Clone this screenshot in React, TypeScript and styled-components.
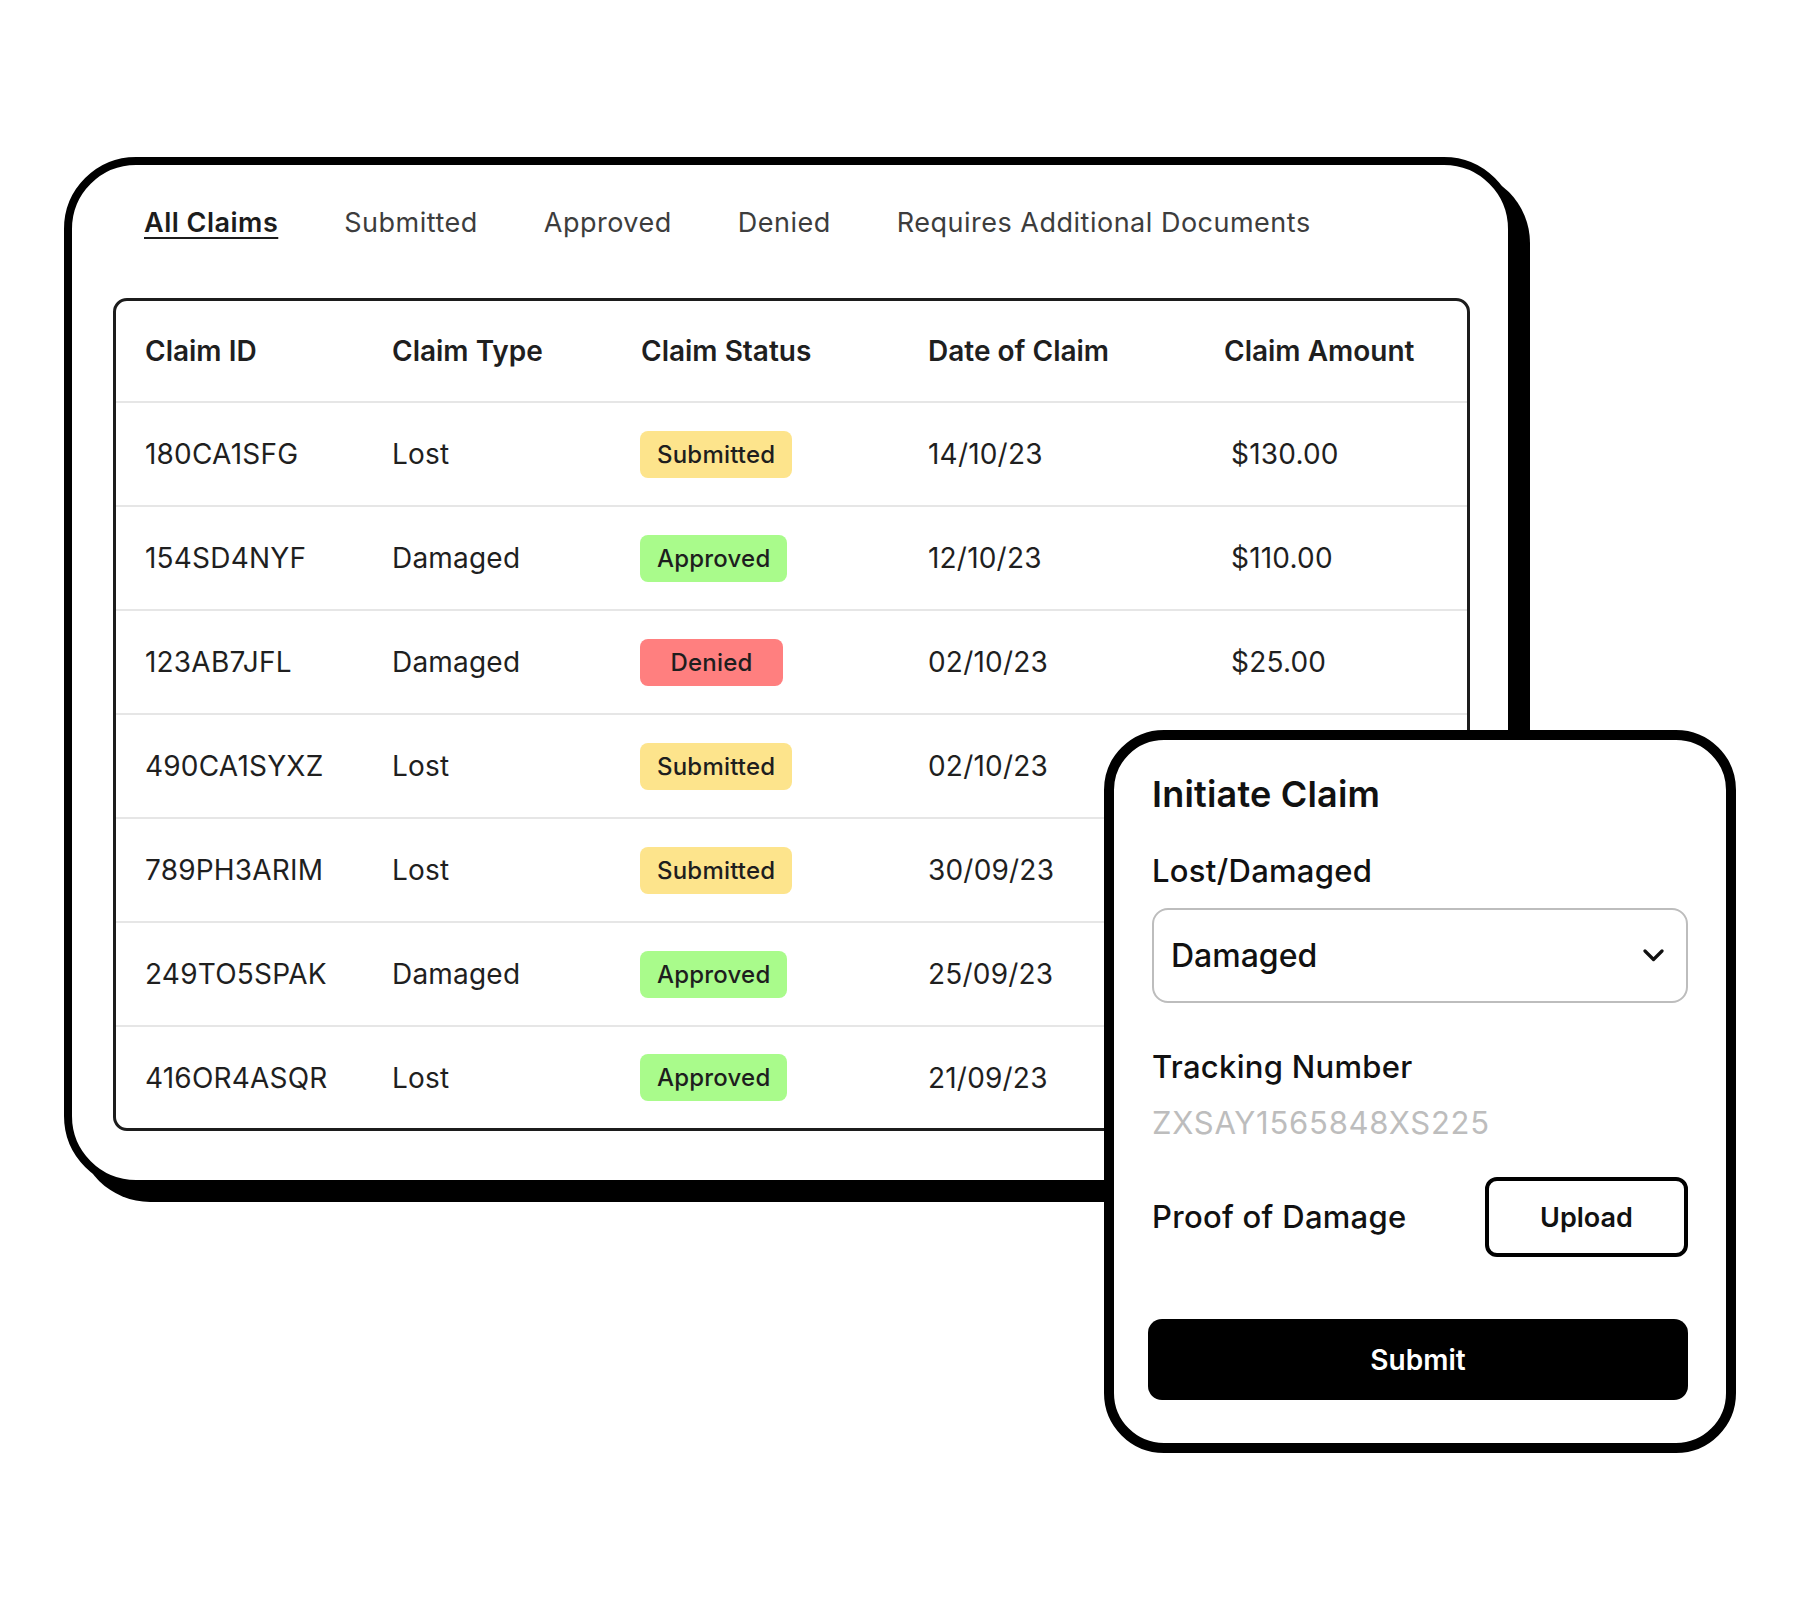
import React from "react";
import styled, { createGlobalStyle } from "styled-components";

const GlobalStyle = createGlobalStyle`
  html, body {
    margin: 0;
    padding: 0;
    background: #ffffff;
  }
  body {
    font-family: Inter, "Noto Sans", "Liberation Sans", sans-serif;
    color: #1a1a1a;
  }
  * {
    box-sizing: border-box;
  }
`;

const Stage = styled.div`
  position: relative;
  width: 1800px;
  height: 1600px;
  padding: 157px 0 0 64px;
`;

const ClaimsCard = styled.section`
  width: 1452px;
  background: #fff;
  border: 8px solid #000;
  border-radius: 72px;
  box-shadow: 14px 14px 0 #000;
  padding: 42px 38px 49px 41px;
`;

const Tabs = styled.nav`
  display: flex;
  gap: 66px;
  padding-left: 31px;
  margin-bottom: 60px;
`;

const Tab = styled.span<{ active?: boolean }>`
  font-size: 27px;
  line-height: 31px;
  letter-spacing: 0.5px;
  font-weight: ${(p) => (p.active ? 600 : 400)};
  color: ${(p) => (p.active ? "#1c1c1c" : "#3d3d3d")};
  text-decoration: ${(p) => (p.active ? "underline" : "none")};
  text-decoration-thickness: 2px;
  text-underline-offset: 5px;
`;

const Table = styled.div`
  border: 3px solid #1c1c1c;
  border-radius: 14px;
  overflow: hidden;
`;

const Row = styled.div<{ header?: boolean }>`
  display: grid;
  grid-template-columns: 247px 249px 287px 296px 1fr;
  align-items: center;
  height: ${(p) => (p.header ? "102px" : "104px")};
  padding-left: 29px;
  border-bottom: 2px solid #e6e6e6;

  &:last-child {
    border-bottom: none;
    height: 101px;
  }
`;

const HeadCell = styled.div`
  font-size: 28px;
  font-weight: 600;
  color: #1f1f1f;
`;

const Cell = styled.div<{ shift?: number }>`
  font-size: 28px;
  letter-spacing: 0.2px;
  font-weight: 400;
  color: #1f1f1f;
  padding-left: ${(p) => p.shift ?? 0}px;
`;

const BADGE_COLORS: Record<string, string> = {
  Submitted: "#fde48c",
  Approved: "#a9fb8b",
  Denied: "#ff7f7f",
};

const Badge = styled.span<{ status: string }>`
  display: inline-flex;
  align-items: center;
  justify-content: center;
  min-width: 143px;
  height: 47px;
  padding: 0 17px;
  margin-left: -1px;
  border-radius: 8px;
  background: ${(p) => BADGE_COLORS[p.status]};
  font-size: 24px;
  letter-spacing: 0.2px;
  font-weight: 500;
  color: #1e1e1e;
`;

const InitiatePanel = styled.aside`
  position: absolute;
  left: 1104px;
  top: 730px;
  width: 632px;
  background: #fff;
  border: 10px solid #000;
  border-radius: 60px;
  padding: 34px 38px 43px 38px;
  display: flex;
  flex-direction: column;
`;

const PanelTitle = styled.h2`
  margin: 0 0 38px;
  font-size: 36px;
  line-height: 41px;
  letter-spacing: 0.2px;
  font-weight: 600;
  color: #111;
`;

const FieldLabel = styled.div<{ gap?: number }>`
  font-size: 31px;
  line-height: 36px;
  letter-spacing: 0.3px;
  font-weight: 500;
  color: #111;
  margin-bottom: ${(p) => p.gap ?? 0}px;
`;

const Select = styled.div`
  display: flex;
  align-items: center;
  justify-content: space-between;
  height: 95px;
  border: 2px solid #bdbdbd;
  border-radius: 16px;
  padding: 0 22px 0 17px;
  margin-bottom: 46px;
  font-size: 32px;
  font-weight: 500;
  color: #111;
`;

const TrackingValue = styled.div`
  margin-top: 20px;
  font-size: 31px;
  line-height: 36px;
  letter-spacing: 0.75px;
  font-weight: 400;
  color: #bdbdbd;
`;

const ProofRow = styled.div`
  display: flex;
  align-items: center;
  justify-content: space-between;
  margin-top: 36px;
`;

const UploadButton = styled.button`
  width: 203px;
  height: 80px;
  border: 4px solid #000;
  border-radius: 12px;
  background: #fff;
  font-family: inherit;
  font-size: 27px;
  font-weight: 600;
  color: #111;
`;

const SubmitButton = styled.button`
  margin: 62px 0 0 -4px;
  height: 81px;
  border: none;
  border-radius: 14px;
  background: #000;
  color: #fff;
  font-family: inherit;
  font-size: 28px;
  font-weight: 600;
`;

const Chevron = () => (
  <svg width="21" height="13" viewBox="0 0 21 13" fill="none">
    <polyline
      points="2,2 10.5,10.5 19,2"
      stroke="#111"
      strokeWidth="3.2"
      strokeLinecap="round"
      strokeLinejoin="round"
    />
  </svg>
);

const claims = [
  { id: "180CA1SFG", type: "Lost", status: "Submitted", date: "14/10/23", amount: "$130.00" },
  { id: "154SD4NYF", type: "Damaged", status: "Approved", date: "12/10/23", amount: "$110.00" },
  { id: "123AB7JFL", type: "Damaged", status: "Denied", date: "02/10/23", amount: "$25.00" },
  { id: "490CA1SYXZ", type: "Lost", status: "Submitted", date: "02/10/23", amount: "$25.00" },
  { id: "789PH3ARIM", type: "Lost", status: "Submitted", date: "30/09/23", amount: "$60.00" },
  { id: "249TO5SPAK", type: "Damaged", status: "Approved", date: "25/09/23", amount: "$45.00" },
  { id: "416OR4ASQR", type: "Lost", status: "Approved", date: "21/09/23", amount: "$80.00" },
];

const tabs = ["All Claims", "Submitted", "Approved", "Denied", "Requires Additional Documents"];

export default function App() {
  return (
    <>
      <GlobalStyle />
      <Stage>
        <ClaimsCard>
          <Tabs>
            {tabs.map((t, i) => (
              <Tab key={t} active={i === 0}>
                {t}
              </Tab>
            ))}
          </Tabs>
          <Table>
            <Row header>
              <HeadCell>Claim ID</HeadCell>
              <HeadCell>Claim Type</HeadCell>
              <HeadCell>Claim Status</HeadCell>
              <HeadCell>Date of Claim</HeadCell>
              <HeadCell>Claim Amount</HeadCell>
            </Row>
            {claims.map((c) => (
              <Row key={c.id}>
                <Cell>{c.id}</Cell>
                <Cell>{c.type}</Cell>
                <div>
                  <Badge status={c.status}>{c.status}</Badge>
                </div>
                <Cell>{c.date}</Cell>
                <Cell shift={7}>{c.amount}</Cell>
              </Row>
            ))}
          </Table>
        </ClaimsCard>

        <InitiatePanel>
          <PanelTitle>Initiate Claim</PanelTitle>
          <FieldLabel gap={19}>Lost/Damaged</FieldLabel>
          <Select>
            <span>Damaged</span>
            <Chevron />
          </Select>
          <FieldLabel>Tracking Number</FieldLabel>
          <TrackingValue>ZXSAY1565848XS225</TrackingValue>
          <ProofRow>
            <FieldLabel>Proof of Damage</FieldLabel>
            <UploadButton>Upload</UploadButton>
          </ProofRow>
          <SubmitButton>Submit</SubmitButton>
        </InitiatePanel>
      </Stage>
    </>
  );
}
